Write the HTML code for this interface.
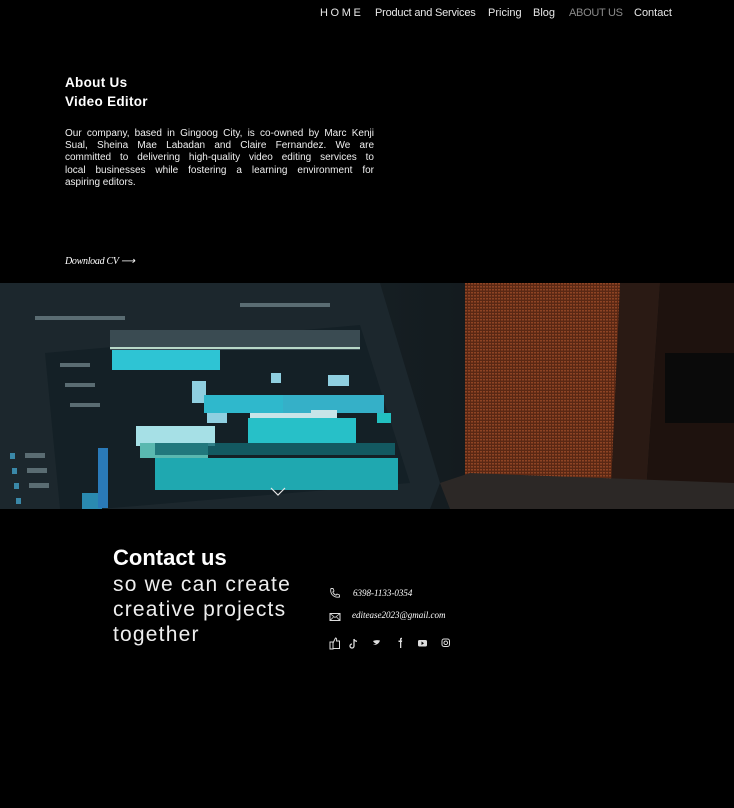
<!DOCTYPE html>
<html><head><meta charset="utf-8"><style>
*{margin:0;padding:0;box-sizing:border-box}
body{width:734px;height:808px;background:#000;color:#fff;font-family:"Liberation Sans",sans-serif;position:relative;overflow:hidden}
.nav{position:absolute;top:7px;font-size:11px;color:#e8e8e8;white-space:nowrap}
.a{position:absolute}
.j{display:block;text-align:justify;text-align-last:justify;white-space:nowrap}
</style></head><body>
<div class="nav" style="left:320px;letter-spacing:2.6px">HOME</div>
<div class="nav" style="left:375px;letter-spacing:-0.2px">Product and Services</div>
<div class="nav" style="left:488px">Pricing</div>
<div class="nav" style="left:533px">Blog</div>
<div class="nav" style="left:569px;color:#8a8a8a;letter-spacing:-0.3px">ABOUT US</div>
<div class="nav" style="left:634px">Contact</div>

<div class="a" style="left:65px;top:73px;font-size:13.5px;font-weight:bold;line-height:19px;letter-spacing:0.3px">About Us<br>Video Editor</div>
<div class="a" style="left:65px;top:128px;width:309px;font-size:10px;line-height:12.2px;color:#f0f0f0">
<span class="j">Our company, based in Gingoog City, is co-owned by Marc Kenji</span>
<span class="j">Sual, Sheina Mae Labadan and Claire Fernandez. We are</span>
<span class="j">committed to delivering high-quality video editing services to</span>
<span class="j">local businesses while fostering a learning environment for</span>
<span style="display:block">aspiring editors.</span>
</div>
<div class="a" style="left:65px;top:256px;font-family:'Liberation Serif',serif;font-style:italic;font-size:10px;letter-spacing:-0.3px">Download CV ⟶</div>

<svg class="a" style="left:0;top:283px" width="734" height="226" viewBox="0 0 734 226">
<defs>
<pattern id="m" width="3" height="3" patternUnits="userSpaceOnUse"><rect width="3" height="3" fill="#5a2814"/><rect width="2" height="1.5" fill="#8e4424"/></pattern>
<linearGradient id="bg" x1="0" x2="1"><stop offset="0" stop-color="#1e2a30"/><stop offset="0.6" stop-color="#141c20"/><stop offset="1" stop-color="#0c0d0d"/></linearGradient>
</defs>
<rect width="734" height="226" fill="url(#bg)"/>
<polygon points="0,0 380,0 440,200 430,226 0,226" fill="#1c272d"/>
<polygon points="45,70 360,42 410,200 100,226 60,226" fill="#142026"/>
<rect x="110" y="47" width="250" height="20" fill="#3a4b52"/>
<rect x="110" y="64" width="250" height="2" fill="#b8d8c8"/>
<rect x="112" y="67" width="108" height="20" fill="#2ec4d4"/>
<rect x="192" y="98" width="14" height="22" fill="#8fcfe0"/>
<rect x="271" y="90" width="10" height="10" fill="#8fcfe0"/>
<rect x="328" y="92" width="21" height="11" fill="#8fcfe0"/>
<rect x="204" y="112" width="79" height="18" fill="#2fb8cc"/>
<rect x="283" y="112" width="101" height="18" fill="#35b0c8"/>
<rect x="250" y="130" width="61" height="17" fill="#c8e4e8"/>
<rect x="311" y="127" width="26" height="10" fill="#c8e4e8"/>
<rect x="207" y="130" width="20" height="10" fill="#8fcfe0"/>
<rect x="377" y="130" width="14" height="10" fill="#22c0c0"/>
<rect x="136" y="143" width="79" height="20" fill="#a6e0e6"/>
<rect x="248" y="135" width="108" height="25" fill="#27c0c8"/>
<rect x="140" y="160" width="68" height="15" fill="#5ab8b0"/>
<rect x="155" y="175" width="243" height="32" fill="#1fa8b0"/>
<rect x="155" y="160" width="240" height="12" fill="#136870" opacity=".8"/>
<rect x="82" y="210" width="20" height="16" fill="#2a8ab0"/>
<rect x="98" y="165" width="10" height="60" fill="#2a7ab8"/>
<g fill="#3a88a8"><rect x="10" y="170" width="5" height="6"/><rect x="12" y="185" width="5" height="6"/><rect x="14" y="200" width="5" height="6"/><rect x="16" y="215" width="5" height="6"/></g>
<g fill="#5a6c72"><rect x="25" y="170" width="20" height="5"/><rect x="27" y="185" width="20" height="5"/><rect x="29" y="200" width="20" height="5"/><rect x="60" y="80" width="30" height="4"/><rect x="65" y="100" width="30" height="4"/><rect x="70" y="120" width="30" height="4"/><rect x="35" y="33" width="90" height="4"/><rect x="240" y="20" width="90" height="4"/></g>
<polygon points="465,0 660,0 620,226 465,226" fill="url(#m)"/>
<polygon points="620,0 660,0 645,226 610,226" fill="#2a1a14"/>
<polygon points="660,0 734,0 734,226 645,226" fill="#1e120e"/>
<rect x="665" y="70" width="69" height="70" fill="#0a0a0a"/>
<polygon points="440,200 470,190 734,200 734,226 450,226" fill="#2c2826"/>
<polyline points="271,205 278,212 285,205" fill="none" stroke="#e6e6e6" stroke-width="1.2"/>
</svg>

<div class="a" style="left:113px;top:544px;font-size:22px;font-weight:bold;line-height:28px">Contact us</div>
<div class="a" style="left:113px;top:572px;font-size:21px;line-height:25px;letter-spacing:1.2px;color:#eee">so we can create<br>creative projects<br>together</div>

<svg class="a" style="left:329px;top:587px" width="12" height="12" viewBox="0 0 12 12"><path d="M2 1.5 L4 1.5 L5 4 L3.8 5 Q5 7.5 7 8.2 L8 7 L10.5 8 L10.5 10 Q6 11 3 7.5 Q1 4.5 2 1.5Z" fill="none" stroke="#ddd" stroke-width="0.9"/></svg>
<div class="a" style="left:353px;top:588px;font-family:'Liberation Serif',serif;font-style:italic;font-size:9px">6398-1133-0354</div>
<svg class="a" style="left:329px;top:612px" width="12" height="10" viewBox="0 0 12 10"><rect x="1" y="1.5" width="10" height="7" fill="none" stroke="#ddd"/><path d="M1 1.5 L6 5.5 L11 1.5 M1 8.5 L4.5 5 M11 8.5 L7.5 5" fill="none" stroke="#ddd" stroke-width=".8"/></svg>
<div class="a" style="left:352px;top:610px;font-family:'Liberation Serif',serif;font-style:italic;font-size:9px">editease2023@gmail.com</div>

<svg class="a" style="left:328px;top:636px" width="125" height="14" viewBox="0 0 125 14">
<path d="M2 6 h3 v7 h-3z M5 7 L7.5 2 Q9 2 8.5 5 H11.5 V12.5 H5" fill="none" stroke="#ddd" stroke-width="1"/>
<path d="M26 3 v7 a2 2 0 1 1 -2 -2 M26 3 q0.5 2 3 2.3" fill="none" stroke="#ddd" stroke-width="1.3"/>
<path d="M45 5 q3 -1.5 7 -0.5 q-1 3 -3.5 4 q-1.8 0.8 -3.5 0 q2 0 3 -1 q-2 -0.5 -3 -2.5z" fill="#ddd"/>
<path d="M72 12 V6 H70.5 V4.5 H72 V3.3 Q72 1.5 74 1.8 V3.2 H73.3 V4.5 H74.2 L74 6 H73.3 V12z" fill="#ddd"/>
<rect x="90" y="4" width="9" height="6.5" rx="1.5" fill="#ddd"/><path d="M93.5 5.5 L96 7.2 L93.5 9z" fill="#000"/>
<rect x="114" y="3" width="7.5" height="7.5" rx="2" fill="none" stroke="#ddd"/><circle cx="117.75" cy="6.75" r="1.8" fill="none" stroke="#ddd"/>
</svg>
</body></html>
